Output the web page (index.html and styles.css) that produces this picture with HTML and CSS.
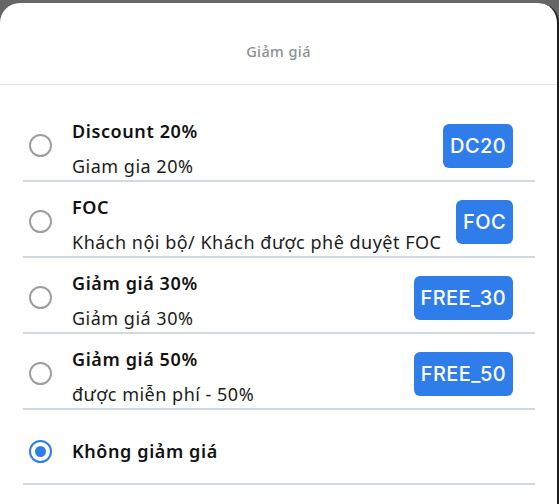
FILE: index.html
```html
<!DOCTYPE html>
<html lang="vi">
<head>
<meta charset="utf-8">
<title>Giảm giá</title>
<link rel="stylesheet" href="styles.css">
</head>
<body>
<div class="sheet">
  <header class="sheet-header">Giảm giá</header>
  <ul class="options">
    <li class="option">
      <span class="radio"></span>
      <div class="text">
        <div class="title">Discount 20%</div>
        <div class="sub">Giam gia 20%</div>
      </div>
      <span class="badge">DC20</span>
    </li>
    <li class="option">
      <span class="radio"></span>
      <div class="text">
        <div class="title">FOC</div>
        <div class="sub">Khách nội bộ/ Khách được phê duyệt FOC</div>
      </div>
      <span class="badge">FOC</span>
    </li>
    <li class="option">
      <span class="radio"></span>
      <div class="text">
        <div class="title">Giảm giá 30%</div>
        <div class="sub">Giảm giá 30%</div>
      </div>
      <span class="badge">FREE_30</span>
    </li>
    <li class="option">
      <span class="radio"></span>
      <div class="text">
        <div class="title">Giảm giá 50%</div>
        <div class="sub">được miễn phí - 50%</div>
      </div>
      <span class="badge">FREE_50</span>
    </li>
    <li class="option option-single">
      <span class="radio radio-on"></span>
      <div class="text">
        <div class="title">Không giảm giá</div>
      </div>
    </li>
  </ul>
</div>
</body>
</html>
```

FILE: styles.css
```css
html, body {
  margin: 0;
  padding: 0;
  background: #666666;
  height: 100%;
  overflow: hidden;
}

body {
  padding-top: 3px;
  box-sizing: border-box;
  font-family: "Noto Sans", "Open Sans", sans-serif;
}

.sheet {
  background: #ffffff;
  border-radius: 20px 20px 0 0;
  border-right: 2px solid #1d1d1d;
  height: 100%;
  box-sizing: border-box;
}

.sheet-header {
  padding: 38px 0 23px;
  line-height: 20px;
  text-align: center;
  font-size: 14.5px;
  letter-spacing: 0.4px;
  font-weight: 500;
  color: #8c9095;
  border-bottom: 1px solid #e4e4e4;
}

.options {
  list-style: none;
  margin: 0;
  padding: 21px 22px 0 23px;
}

.option {
  display: flex;
  align-items: center;
  padding: 13px 22px 2px 6px;
  border-bottom: 2px solid #d2d9e3;
}

.option-single {
  padding: 29px 22px 20px 6px;
}

.radio {
  flex: none;
  width: 23px;
  height: 23px;
  box-sizing: border-box;
  border: 2px solid #9e9e9e;
  border-radius: 50%;
  margin-top: -6px;
  margin-right: 20px;
  display: flex;
  align-items: center;
  justify-content: center;
}

.option-single .radio {
  margin-top: 0;
}

.radio-on {
  border: 2.5px solid #2f7deb;
}

.radio-on::after {
  content: "";
  width: 11px;
  height: 11px;
  border-radius: 50%;
  background: #2f7deb;
}

.text {
  flex: 1;
  min-width: 0;
}

.title {
  font-size: 18px;
  line-height: 24px;
  letter-spacing: 0.6px;
  font-weight: 600;
  color: #121212;
}

.sub {
  margin-top: 11px;
  font-size: 18px;
  line-height: 24px;
  letter-spacing: 0.5px;
  color: #1c1c1c;
}

.badge {
  flex: none;
  margin-top: -6px;
  height: 44px;
  padding: 0 7px;
  display: flex;
  align-items: center;
  background: #2f7deb;
  color: #ffffff;
  border-radius: 6px;
  font-family: "Inter", "Noto Sans", sans-serif;
  font-size: 20px;
  letter-spacing: 0.4px;
  font-weight: 500;
}
```
